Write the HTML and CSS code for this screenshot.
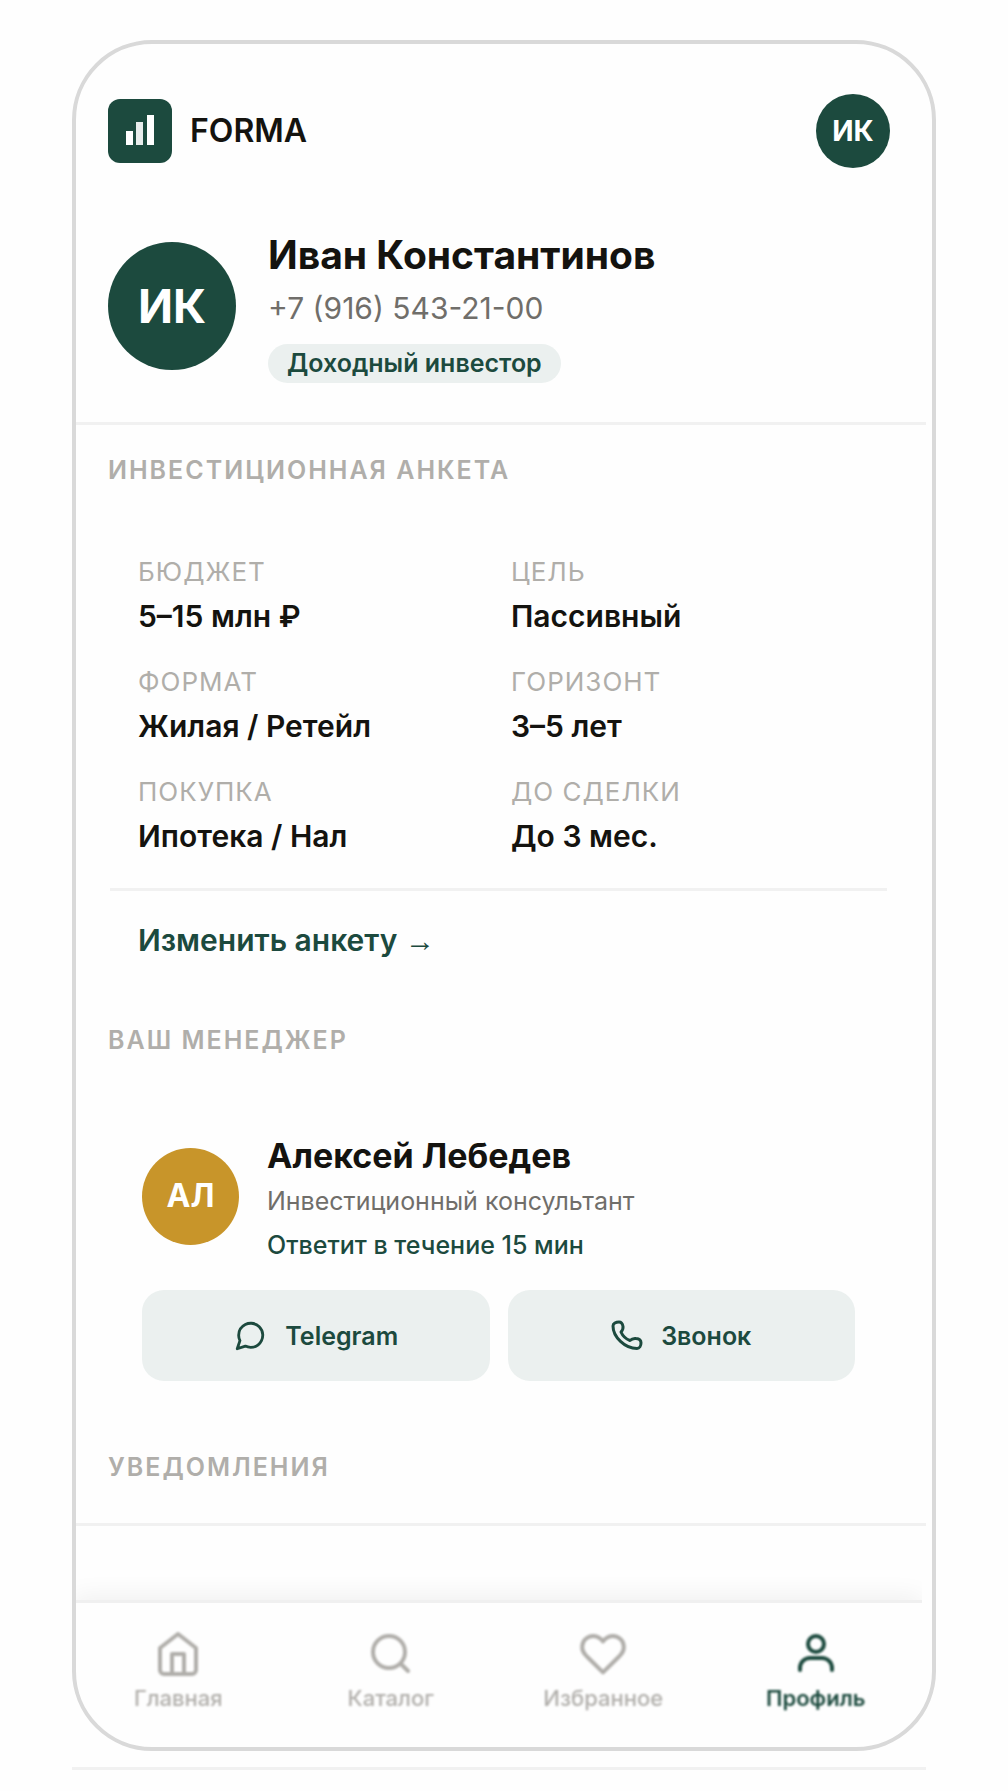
FILE: index.html
```html
<!DOCTYPE html>
<html lang="ru">
<head>
    <meta charset="UTF-8">
    <meta name="viewport" content="width=device-width, initial-scale=1.0">
    <title>FORMA — Профиль</title>
    <link rel="stylesheet" href="styles.css">
</head>
<body>

<div class="phone">
    <!-- Шапка -->
    <header class="header">
        <a class="brand" href="#">
            <svg class="logo" viewBox="0 0 64 64" aria-hidden="true">
                <rect width="64" height="64" rx="12" fill="#1c4a3e"/>
                <rect x="18" y="32" width="7" height="14" fill="#fff"/>
                <rect x="28" y="23" width="7" height="23" fill="#e8edec"/>
                <rect x="39" y="16" width="7" height="30" fill="#fff"/>
            </svg>
            <span>FORMA</span>
        </a>
        <a class="avatar avatar-small" href="#">ИК</a>
    </header>

    <main>
        <!-- Профиль -->
        <section class="profile">
            <div class="avatar avatar-large">ИК</div>
            <div>
                <h1>Иван Константинов</h1>
                <p class="phone-number">+7 (916) 543-21-00</p>
                <span class="badge">Доходный инвестор</span>
            </div>
        </section>

        <!-- Анкета -->
        <h2 class="section-title">Инвестиционная анкета</h2>
        <section class="survey">
            <dl class="survey-grid">
                <div><dt>Бюджет</dt><dd>5–15 млн ₽</dd></div>
                <div><dt>Цель</dt><dd>Пассивный</dd></div>
                <div><dt>Формат</dt><dd>Жилая / Ретейл</dd></div>
                <div><dt>Горизонт</dt><dd>3–5 лет</dd></div>
                <div><dt>Покупка</dt><dd>Ипотека / Нал</dd></div>
                <div><dt>До сделки</dt><dd>До 3 мес.</dd></div>
            </dl>
            <a class="survey-link" href="#">Изменить анкету <span class="arrow">→</span></a>
        </section>

        <!-- Менеджер -->
        <h2 class="section-title">Ваш менеджер</h2>
        <section class="manager">
            <div class="manager-info">
                <div class="avatar avatar-manager">АЛ</div>
                <div>
                    <h3>Алексей Лебедев</h3>
                    <p class="role">Инвестиционный консультант</p>
                    <p class="reply">Ответит в течение 15 мин</p>
                </div>
            </div>
            <div class="actions">
                <button type="button">
                    <svg viewBox="0 0 24 24" aria-hidden="true"><path d="M21 11.5a8.4 8.4 0 0 1-.9 3.8 8.5 8.5 0 0 1-7.6 4.7 8.4 8.4 0 0 1-3.8-.9L3 21l1.9-5.7a8.4 8.4 0 0 1-.9-3.8 8.5 8.5 0 0 1 4.7-7.6 8.4 8.4 0 0 1 3.8-.9h.5a8.5 8.5 0 0 1 8 8z"/></svg>
                    Telegram
                </button>
                <button type="button">
                    <svg class="icon-call" viewBox="0 0 32 32" aria-hidden="true"><path d="M2 6C2 3.5 5 2 8 2c2.5 0 3.5 1.5 4 4.5.3 2.5-.5 4-2 5.5 1.5 3.5 5 7 9 8.5 1.5-1.5 3.5-2.3 6-2 3.5.3 5 1.7 5 4.2 0 3-1.5 5.8-4 5.8C14 28.5 2 17 2 6z"/></svg>
                    Звонок
                </button>
            </div>
        </section>

        <h2 class="section-title notifications">Уведомления</h2>
    </main>

    <!-- Нижнее меню -->
    <nav class="tabs">
        <a href="#">
            <svg viewBox="0 0 24 24" aria-hidden="true"><path d="M3 9l9-7 9 7v11a2 2 0 0 1-2 2H5a2 2 0 0 1-2-2z"/><path d="M9 22V12h6v10"/></svg>
            <span>Главная</span>
        </a>
        <a href="#">
            <svg viewBox="0 0 24 24" aria-hidden="true"><circle cx="11" cy="11" r="8"/><path d="M17 17l3.5 3.5"/></svg>
            <span>Каталог</span>
        </a>
        <a href="#">
            <svg viewBox="0 0 24 24" aria-hidden="true"><path d="M20.8 4.6a5.5 5.5 0 0 0-7.8 0L12 5.7l-1-1.1a5.5 5.5 0 0 0-7.8 7.8l1 1.1L12 21.2l7.8-7.7 1-1.1a5.5 5.5 0 0 0 0-7.8z"/></svg>
            <span>Избранное</span>
        </a>
        <a class="active" href="#">
            <svg viewBox="0 0 24 24" aria-hidden="true"><circle cx="12" cy="7" r="4"/><path d="M4 20v-1a5 5 0 0 1 5-5h6a5 5 0 0 1 5 5v1"/></svg>
            <span>Профиль</span>
        </a>
    </nav>
</div>
<hr class="page-line">

</body>
</html>
```
FILE: styles.css
```css
* {
    box-sizing: border-box;
}

body {
    margin: 40px 72px 20px;
    font-family: Inter, "Noto Sans", sans-serif;
    font-size: 25px;
    line-height: 32px;
    color: #14130f;
    background-color: #fefefe;
}

h1, h2, h3, p, dl, dd {
    margin: 0;
}

a {
    color: inherit;
    text-decoration: none;
}

.phone {
    border: 4px solid #d9d9d9;
    border-radius: 80px;
    overflow: hidden;
}

.header {
    display: flex;
    justify-content: space-between;
    align-items: center;
    padding: 50px 42px 0 32px;
}

.brand {
    display: flex;
    align-items: center;
    gap: 18px;
    font-size: 32px;
    font-weight: 600;
}

.logo {
    width: 64px;
    height: 64px;
}

.avatar {
    display: flex;
    flex-shrink: 0;
    align-items: center;
    justify-content: center;
    border-radius: 50%;
    color: #fff;
    background-color: #1c4a3e;
    font-weight: 700;
}

.avatar-small {
    width: 74px;
    height: 74px;
    font-size: 28px;
}

.avatar-large {
    width: 128px;
    height: 128px;
    font-size: 46px;
}

.avatar-manager {
    width: 97px;
    height: 97px;
    font-size: 32px;
    background-color: #c8952a;
}

.profile {
    display: flex;
    align-items: center;
    gap: 32px;
    margin-right: 6px;
    padding: 60px 32px 39px;
    border-bottom: 3px solid #f1f1f1;
}

h1 {
    font-size: 39px;
    font-weight: 700;
    line-height: 54px;
}

.phone-number {
    margin: 2px 0 12px;
    font-size: 30px;
    line-height: 48px;
    color: #706e6a;
}

.badge {
    display: block;
    width: fit-content;
    padding: 0 19px;
    border-radius: 20px;
    font-weight: 600;
    line-height: 39px;
    color: #1c4a3e;
    background-color: #ebf0ef;
}

.section-title {
    padding: 29px 32px 0;
    font-size: 25px;
    font-weight: 600;
    line-height: 32px;
    letter-spacing: 2px;
    text-transform: uppercase;
    color: #b0aeaa;
}

.survey {
    margin: 70px 45px 35px 34px;
}

.survey-grid {
    display: grid;
    grid-template-columns: 1fr 1fr;
    gap: 30px 0;
    padding: 0 3px 32px 28px;
    border-bottom: 3px solid #f1f1f1;
}

dt {
    font-size: 26px;
    letter-spacing: 1px;
    text-transform: uppercase;
    color: #b0aeaa;
}

dd {
    margin-top: 8px;
    font-size: 30px;
    font-weight: 600;
    line-height: 40px;
}

.survey-link {
    display: block;
    padding: 29px 28px 0;
    font-size: 30px;
    font-weight: 600;
    line-height: 40px;
    color: #1c4a3e;
}

.arrow {
    font-family: "Liberation Sans", sans-serif;
    font-size: 30px;
    line-height: 1;
}

.manager {
    margin: 73px 77px 41px 66px;
}

.manager-info {
    display: flex;
    align-items: center;
    gap: 28px;
}

h3 {
    font-size: 34px;
    font-weight: 700;
    line-height: 54px;
}

.role {
    line-height: 36px;
    color: #706e6a;
}

.reply {
    margin-top: 8px;
    font-weight: 500;
    line-height: 36px;
    color: #1c4a3e;
}

.actions {
    display: flex;
    gap: 18px;
    margin-top: 27px;
}

button {
    display: flex;
    flex: 1;
    align-items: center;
    justify-content: center;
    gap: 18px;
    height: 91px;
    border: none;
    border-radius: 22px;
    font: inherit;
    font-weight: 600;
    color: #1c4a3e;
    background-color: #ebf0ef;
    cursor: pointer;
}

svg {
    flex-shrink: 0;
    fill: none;
    stroke-linecap: round;
    stroke-linejoin: round;
}

button svg {
    width: 34px;
    height: 34px;
    stroke: currentColor;
    stroke-width: 2;
}

button .icon-call {
    width: 32px;
    height: 32px;
    stroke-width: 3;
}

.notifications {
    margin-right: 6px;
    padding-bottom: 40px;
    border-bottom: 3px solid #f1f1f1;
}

/* меню заходит под рамку слева, тень видна только сверху */
.tabs {
    display: grid;
    grid-template-columns: repeat(4, 1fr);
    margin: 74px 10px 0 -4px;
    padding: 27px 0 35px;
    border-top: 3px solid #f0f0f0;
    box-shadow: 0 -4px 24px rgba(0, 0, 0, 0.06);
    clip-path: inset(-24px 0 0 0);
}

.tabs a {
    display: flex;
    flex-direction: column;
    align-items: center;
    gap: 6px;
    font-size: 22px;
    font-weight: 500;
    line-height: 28px;
    color: #b0aeaa;
    filter: blur(1px);
}

.tabs svg {
    width: 48px;
    height: 48px;
    stroke: currentColor;
    stroke-width: 2;
}

.tabs .active {
    font-weight: 600;
    color: #1c4a3e;
}

.page-line {
    margin: 16px 10px 0 0;
    border: none;
    border-top: 3px solid #f1f1f1;
}
```
